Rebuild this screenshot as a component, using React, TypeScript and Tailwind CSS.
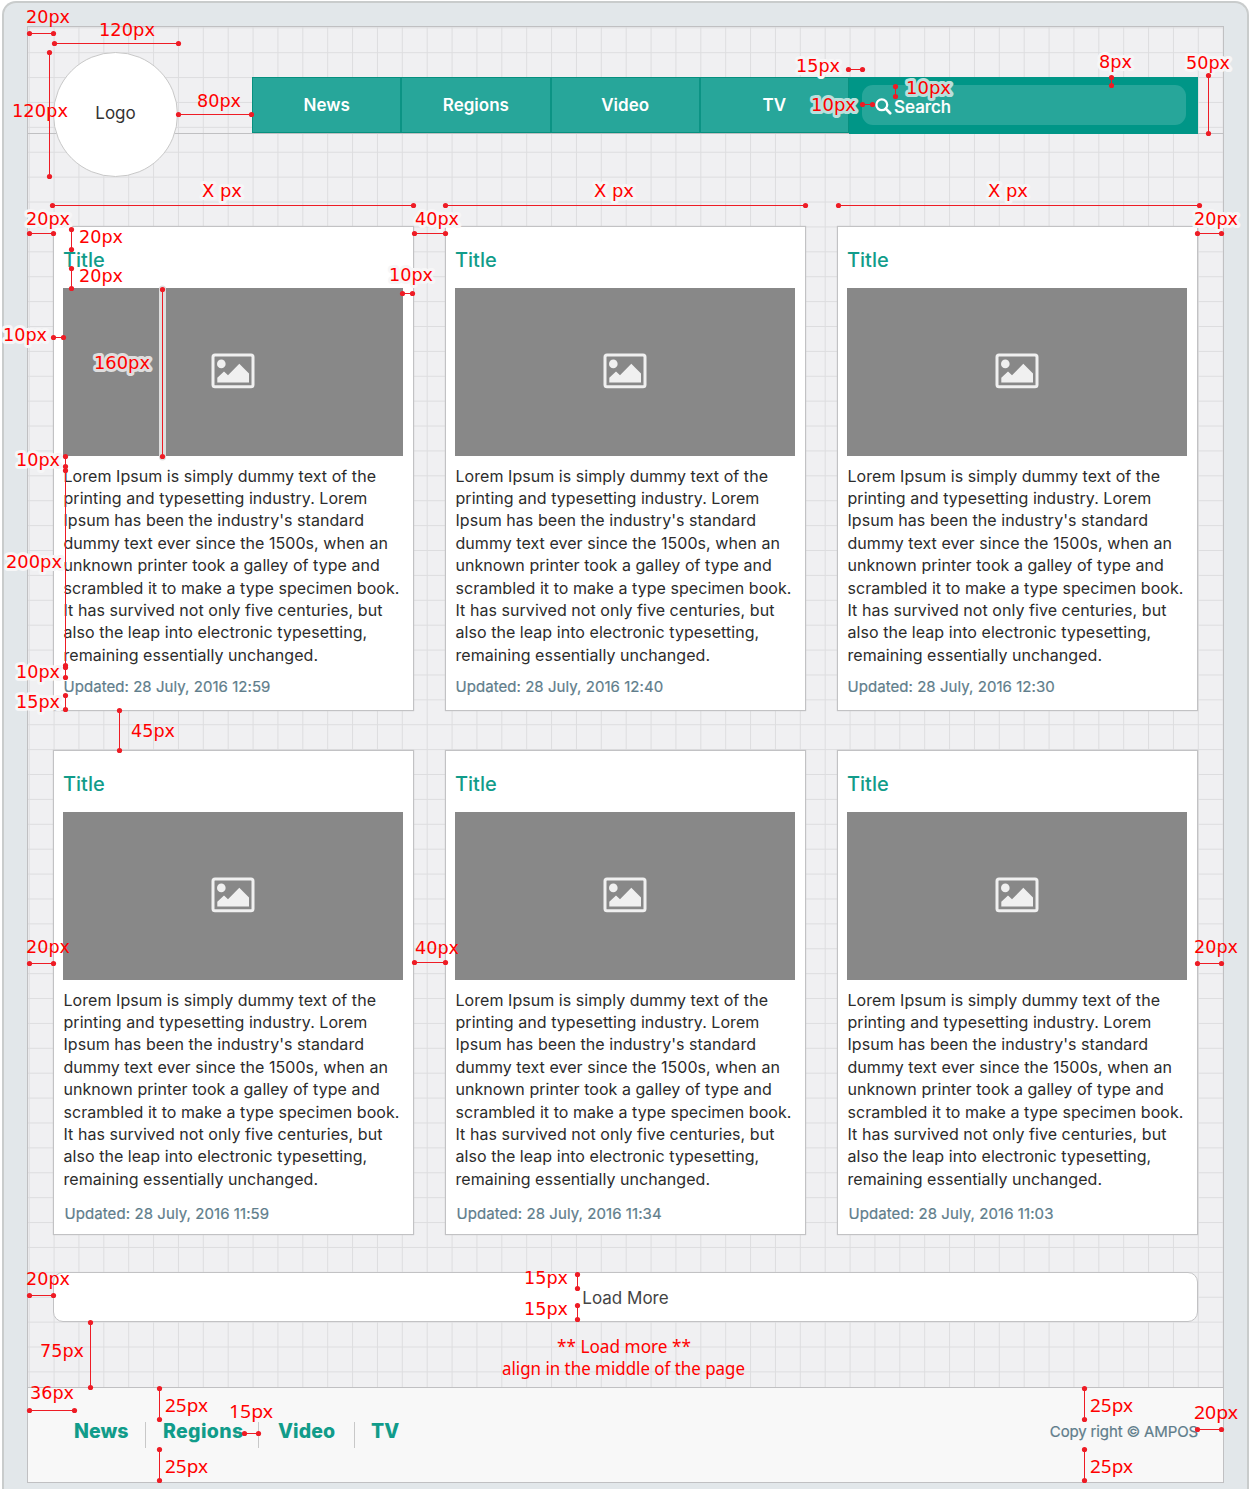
import React from "react";

const LINES = [
  "Lorem Ipsum is simply dummy text of the",
  "printing and typesetting industry. Lorem",
  "Ipsum has been the industry's standard",
  "dummy text ever since the 1500s, when an",
  "unknown printer took a galley of type and",
  "scrambled it to make a type specimen book.",
  "It has survived not only five centuries, but",
  "also the leap into electronic typesetting,",
  "remaining essentially unchanged.",
];

const NAV = ["News", "Regions", "Video", "TV"];

function ImageIcon() {
  return (
    <svg width="44" height="36" viewBox="0 0 44 36" fill="none" className="mb-[2px]">
      <rect x="2" y="2.1" width="40" height="31.6" rx="2" stroke="#f0f0f0" strokeWidth="3" />
      <circle cx="10.3" cy="10.9" r="4.3" fill="#f0f0f0" />
      <path d="M6.3 29.6V24.8L13 18.4L17 22.3L28.3 10.8L38 20.6V29.6Z" fill="#f0f0f0" />
    </svg>
  );
}

function Card({ time, row }: { time: string; row: number }) {
  return (
    <article className="flex h-[485px] w-[361px] flex-col border border-[#c2c2c4] bg-white px-[9px] shadow-[0_0_1px_#c4c4c4]">
      <h2 className="mt-[18px] h-[43px] shrink-0 pt-[1px] text-[20px] leading-[28px] font-medium text-[#119c8a]">Title</h2>
      <div className="flex h-[168px] w-[340px] shrink-0 items-center justify-center bg-[#888888]">
        <ImageIcon />
      </div>
      <p className="mt-[8.6px] h-[202px] shrink-0 pl-[0.5px] text-[16px] leading-[22.4px] tracking-[0.05px] whitespace-nowrap text-[#2c2c2c]">
        {LINES.map((l) => (
          <span key={l} className="block">{l}</span>
        ))}
      </p>
      <time className={row === 0 ? "mt-[9.4px] pl-[0.5px] text-[15px] leading-[22px] tracking-[0.05px] text-[#607d8b] [-webkit-text-stroke:0.2px_#607d8b]" : "mt-[12.4px] pl-[1.5px] text-[15px] leading-[22px] tracking-[0.08px] text-[#607d8b] [-webkit-text-stroke:0.2px_#607d8b]"}>
        Updated: 28 July, 2016 {time}
      </time>
    </article>
  );
}

// Dimension lines: x1, y1, x2, y2
const DIMS: number[][] = [
  [29, 33, 53, 33], [54, 43, 178, 43], [49, 52, 49, 176], [178, 114, 251, 114],
  [52, 205, 413, 205], [445, 205, 805, 205], [838, 205, 1199, 205],
  [848, 69, 862, 69], [1111, 77, 1111, 85], [895, 86, 895, 96], [862, 104, 872, 104], [1208, 75, 1208, 133],
  [29, 233, 53, 233], [414, 233, 445, 233], [1197, 233, 1221, 233],
  [71, 229, 71, 249], [71, 268, 71, 288], [402, 293, 412, 293], [53, 337, 63, 337],
  [65, 456, 65, 466], [65, 470, 65, 665], [65, 667, 65, 677], [65, 695, 65, 709],
  [119, 710, 119, 750], [29, 963, 53, 963], [414, 962, 445, 962], [1197, 963, 1221, 963],
  [577, 1274, 577, 1288], [577, 1305, 577, 1319], [29, 1295, 53, 1295], [90, 1322, 90, 1387],
  [29, 1410, 74, 1410], [159, 1388, 159, 1419], [159, 1449, 159, 1480], [244, 1433, 258, 1433],
  [1084, 1388, 1084, 1419], [1084, 1449, 1084, 1480], [1197, 1429, 1221, 1429],
];

type Note = [text: string, x: number, baseline: number, width: number, halo?: string, narrow?: boolean];
const W = "#f6f6f7";
const T = "#b9e0dc";
const G = "#dedede";
const NOTES: Note[] = [
  ["20px", 26, 23, 44], ["120px", 99, 36, 56], ["120px", 12, 117, 56], ["80px", 197, 107, 44],
  ["X px", 202, 197, 40, W], ["X px", 594, 197, 40, W], ["X px", 988, 197, 40, W],
  ["15px", 796, 72, 44, W], ["8px", 1099, 68, 33, W], ["10px", 906, 94, 45, T], ["10px", 811, 111, 45, T], ["50px", 1186, 69, 44, W],
  ["20px", 26, 225, 44, W], ["40px", 415, 225, 44, W], ["20px", 1194, 225, 44, W],
  ["20px", 79, 243, 44], ["20px", 79, 282, 44], ["10px", 389, 281, 44, W], ["10px", 3, 341, 44, W],
  ["160px", 94, 369, 56, G], ["10px", 16, 466, 44, W], ["200px", 6, 568, 56, W], ["10px", 16, 678, 44, W], ["15px", 16, 708, 44, W],
  ["45px", 131, 737, 44], ["20px", 26, 953, 44], ["40px", 415, 954, 44], ["20px", 1194, 953, 44],
  ["15px", 524, 1284, 44], ["15px", 524, 1315, 44], ["20px", 26, 1285, 44], ["75px", 40, 1357, 44], ["36px", 30, 1399, 44],
  ["** Load more **", 557, 1353, 134, undefined, true], ["align in the middle of the page", 502, 1375, 243, undefined, true],
  ["25px", 165, 1412, 43, undefined, true], ["15px", 229, 1418, 44, undefined, true], ["25px", 165, 1473, 43, undefined, true],
  ["25px", 1090, 1412, 43, undefined, true], ["20px", 1194, 1419, 44, undefined, true], ["25px", 1090, 1473, 43, undefined, true],
];

function Annotations() {
  return (
    <svg className="pointer-events-none absolute top-0 left-0" width="1250" height="1490">
      <path d="M162.5 289V457" stroke="#dedede" strokeWidth="7" strokeLinecap="round" />
      {NOTES.map(([text, x, y, w, halo, narrow], i) => (
        <text
          key={i}
          x={x}
          y={y}
          textLength={w}
          lengthAdjust="spacingAndGlyphs"
          fill="#ff0000"
          stroke={halo ?? "none"}
          strokeWidth="6"
          strokeLinejoin="round"
          paintOrder="stroke"
          className={narrow ? "font-['Noto_Sans',sans-serif] text-[17.5px]" : "font-['DejaVu_Sans',sans-serif] text-[17.5px]"}
        >
          {text}
        </text>
      ))}
      {[...DIMS, [162, 289, 162, 456]].map(([a, b, c, d], i) => (
        <g key={i} fill="#ee1c25">
          <path d={`M${a + 0.5} ${b + 0.5}L${c + 0.5} ${d + 0.5}`} stroke="#ee1c25" />
          <circle cx={a + 0.5} cy={b + 0.5} r="2.6" />
          <circle cx={c + 0.5} cy={d + 0.5} r="2.6" />
        </g>
      ))}
    </svg>
  );
}

export default function App() {
  return (
    <div className="relative h-[1490px] w-[1250px] overflow-hidden bg-white pt-px pl-[2px] font-['Inter',sans-serif]">
      <div className="h-[1488px] w-[1247px] rounded-t-[14px] border-2 border-b-0 border-[#c9cccc] bg-[#e2e7ea] pt-[23px] pl-[23px]">
        <div className="flex h-[1457px] w-[1197px] flex-col border border-[#c0c0c2] bg-[#f0f0f2] bg-[linear-gradient(to_right,#dddddf_1px,transparent_1px),linear-gradient(to_bottom,#dddddf_1px,transparent_1px)] bg-[size:24.885px_24.9px] bg-[position:0.7px_0.3px]">
          <header className="h-[107px] border-b border-[#c0c0c2]">
            <div className="flex pl-[25px]">
              <div className="mt-[25px] flex size-[125px] shrink-0 items-center justify-center rounded-full border-[1.5px] border-[#c8c8c8] bg-white pb-[2px] text-[17px] text-[#333333]">
                Logo
              </div>
              <nav className="mt-[50px] ml-[74px] flex h-[56px] w-[597px] border border-[#07907f] bg-[#27a69a]">
                {NAV.map((n, i) => (
                  <a key={n} className={i < 3 ? "flex-1 border-r-2 border-[#0b9384] text-center text-[17px] leading-[54px] font-semibold text-white" : "flex-1 text-center text-[17px] leading-[54px] font-semibold text-white"}>
                    {n}
                  </a>
                ))}
              </nav>
              <div className="mt-[50px] h-[57px] w-[349px] bg-[#009687] pt-[8px] pl-[13px]">
                <div className="flex h-[40px] w-[324px] items-center rounded-[11px] bg-[#27a69a] pl-[13px] text-[17px] font-medium text-white">
                  <svg width="17" height="17" viewBox="0 0 17 17" fill="none" stroke="white" className="mt-[2px] mr-[2px]">
                    <circle cx="6.8" cy="6.8" r="5.4" strokeWidth="2.3" />
                    <path d="M10.8 10.8L15.2 15.2" strokeWidth="2.7" strokeLinecap="round" />
                  </svg>
                  <span className="pt-[5px] [-webkit-text-stroke:0.2px_white]">Search</span>
                </div>
              </div>
            </div>
          </header>
          <main className="flex flex-col pt-[92px] pl-[25px]">
            <div className="grid w-[1145px] grid-cols-3 gap-x-[31px] gap-y-[39px]">
              {["12:59", "12:40", "12:30", "11:59", "11:34", "11:03"].map((t, i) => (
                <Card key={t} time={t} row={i < 3 ? 0 : 1} />
              ))}
            </div>
            <button className="mt-[37px] h-[50px] w-[1145px] rounded-[10px] border-[1.5px] border-[#c2c2c4] bg-white pt-[3px] text-[17px] text-[#444444]">
              Load More
            </button>
          </main>
          <footer className="mt-[65px] flex h-[95px] items-center justify-between border-t border-[#c0c0c2] bg-[#f8f8f8] pr-[25px] pl-[46px]">
            <nav className="flex h-[26px] text-[19.5px] leading-[19px] font-extrabold text-[#119c8a]">
              <a className="w-[72px] border-r border-[#c8c8c8]">News</a>
              <a className="w-[113px] border-r border-[#c8c8c8] pl-[17px] tracking-[0.35px]">Regions</a>
              <a className="w-[96px] border-r border-[#c8c8c8] pl-[19px] tracking-[0.1px]">Video</a>
              <a className="pl-[16px]">TV</a>
            </nav>
            <span className="pb-[6px] text-[15px] tracking-[-0.14px] text-[#607d8b] [-webkit-text-stroke:0.2px_#607d8b]">Copy right © AMPOS</span>
          </footer>
        </div>
      </div>
      <Annotations />
    </div>
  );
}
